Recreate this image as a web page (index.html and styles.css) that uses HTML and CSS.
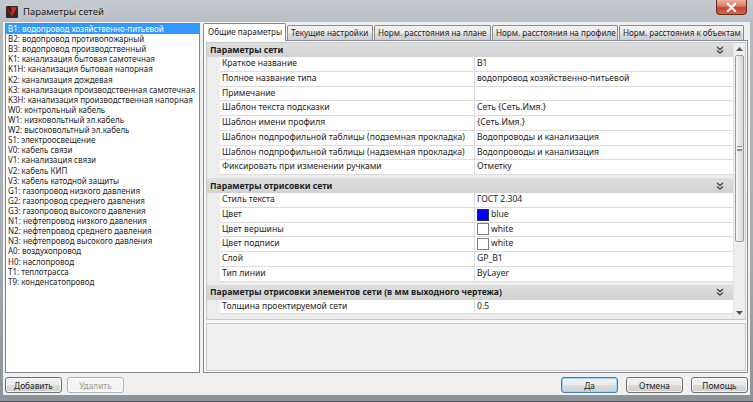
FILE: index.html
```html
<!DOCTYPE html>
<html lang="ru">
<head>
<meta charset="utf-8">
<title>Параметры сетей</title>
<link rel="stylesheet" href="styles.css">
</head>
<body>
<div class="window">
  <div class="titlebar">
    <svg class="appicon" width="12" height="12" viewBox="0 0 12 12">
      <rect x="0" y="0" width="12" height="12" rx="1" fill="#2b2b2b"/>
      <polygon points="1,1 11,1 6,11" fill="#d8231f"/>
      <polygon points="1,1 5,1 6,8" fill="#5a1010"/>
    </svg>
    <span class="title">Параметры сетей</span>
    <div class="close">
      <svg width="11" height="9" viewBox="0 0 11 9"><path d="M2 1 L9 8 M9 1 L2 8" stroke="#fff" stroke-width="2.2" stroke-linecap="square"/></svg>
    </div>
  </div>
  <div class="client">
    <div class="main">
      <ul class="netlist">
        <li class="sel">B1: водопровод хозяйственно-питьевой</li>
        <li>B2: водопровод противопожарный</li>
        <li>B3: водопровод производственный</li>
        <li>K1: канализация бытовая самотечная</li>
        <li>K1H: канализация бытовая напорная</li>
        <li>K2: канализация дождевая</li>
        <li>K3: канализация производственная самотечная</li>
        <li>K3H: канализация производственная напорная</li>
        <li>W0: контрольный кабель</li>
        <li>W1: низковольтный эл.кабель</li>
        <li>W2: высоковольтный эл.кабель</li>
        <li>S1: электроосвещение</li>
        <li>V0: кабель связи</li>
        <li>V1: канализация связи</li>
        <li>V2: кабель КИП</li>
        <li>V3: кабель катодной защиты</li>
        <li>G1: газопровод низкого давления</li>
        <li>G2: газопровод среднего давления</li>
        <li>G3: газопровод высокого давления</li>
        <li>N1: нефтепровод низкого давления</li>
        <li>N2: нефтепровод среднего давления</li>
        <li>N3: нефтепровод высокого давления</li>
        <li>A0: воздухопровод</li>
        <li>H0: наслопровод</li>
        <li>T1: теплотрасса</li>
        <li>T9: конденсатопровод</li>
      </ul>
      <div class="tabs">
        <div class="tabstrip">
          <div class="tab active t1">Общие параметры</div>
          <div class="tab t2">Текущие настройки</div>
          <div class="tab t3">Норм. расстояния на плане</div>
          <div class="tab t4">Норм. расстояния на профиле</div>
          <div class="tab t5">Норм. расстояния к объектам</div>
        </div>
        <div class="tabpanel">
          <div class="pgrid">
            <div class="pg-body">
              <div class="cat first"><span>Параметры сети</span>
                <svg class="chev" width="8" height="8" viewBox="0 0 8 8"><path d="M1 1 L4 3.5 L7 1 M1 4.5 L4 7 L7 4.5" fill="none" stroke="#4a4a4a" stroke-width="1.4"/></svg>
              </div>
              <div class="row"><div class="gut"></div><div class="label">Краткое название</div><div class="value">B1</div></div>
              <div class="row"><div class="gut"></div><div class="label">Полное название типа</div><div class="value">водопровод хозяйственно-питьевой</div></div>
              <div class="row"><div class="gut"></div><div class="label">Примечание</div><div class="value"></div></div>
              <div class="row"><div class="gut"></div><div class="label">Шаблон текста подсказки</div><div class="value">Сеть {Сеть.Имя.}</div></div>
              <div class="row"><div class="gut"></div><div class="label">Шаблон имени профиля</div><div class="value">{Сеть.Имя.}</div></div>
              <div class="row"><div class="gut"></div><div class="label">Шаблон подпрофильной таблицы (подземная прокладка)</div><div class="value">Водопроводы и канализация</div></div>
              <div class="row"><div class="gut"></div><div class="label">Шаблон подпрофильной таблицы (надземная прокладка)</div><div class="value">Водопроводы и канализация</div></div>
              <div class="row"><div class="gut"></div><div class="label">Фиксировать при изменении ручками</div><div class="value">Отметку</div></div>
              <div class="cat"><span>Параметры отрисовки сети</span>
                <svg class="chev" width="8" height="8" viewBox="0 0 8 8"><path d="M1 1 L4 3.5 L7 1 M1 4.5 L4 7 L7 4.5" fill="none" stroke="#4a4a4a" stroke-width="1.4"/></svg>
              </div>
              <div class="row"><div class="gut"></div><div class="label">Стиль текста</div><div class="value">ГОСТ 2.304</div></div>
              <div class="row"><div class="gut"></div><div class="label">Цвет</div><div class="value"><span class="swatch blue"></span>blue</div></div>
              <div class="row"><div class="gut"></div><div class="label">Цвет вершины</div><div class="value"><span class="swatch white"></span>white</div></div>
              <div class="row"><div class="gut"></div><div class="label">Цвет подписи</div><div class="value"><span class="swatch white"></span>white</div></div>
              <div class="row"><div class="gut"></div><div class="label">Слой</div><div class="value">GP_B1</div></div>
              <div class="row"><div class="gut"></div><div class="label">Тип линии</div><div class="value">ByLayer</div></div>
              <div class="cat"><span>Параметры отрисовки элементов сети (в мм выходного чертежа)</span>
                <svg class="chev" width="8" height="8" viewBox="0 0 8 8"><path d="M1 1 L4 3.5 L7 1 M1 4.5 L4 7 L7 4.5" fill="none" stroke="#4a4a4a" stroke-width="1.4"/></svg>
              </div>
              <div class="row"><div class="gut"></div><div class="label">Толщина проектируемой сети</div><div class="value">0.5</div></div>
            </div>
            <div class="vscroll">
              <div class="arrow"><svg width="7" height="4" viewBox="0 0 7 4"><path d="M0 4 L3.5 0 L7 4Z" fill="#555"/></svg></div>
              <div class="track">
                <div class="thumb"><span class="grip"></span></div>
              </div>
              <div class="arrow"><svg width="7" height="4" viewBox="0 0 7 4"><path d="M0 0 L3.5 4 L7 0Z" fill="#555"/></svg></div>
            </div>
          </div>
          <div class="help"></div>
        </div>
      </div>
    </div>
    <div class="bottombar">
      <div class="btngroup left">
        <button class="btn">Добавить</button>
        <button class="btn disabled">Удалить</button>
      </div>
      <div class="btngroup right">
        <button class="btn default">Да</button>
        <button class="btn">Отмена</button>
        <button class="btn">Помощь</button>
      </div>
    </div>
  </div>
</div>
</body>
</html>
```
FILE: styles.css
```css
* { box-sizing: border-box; }
html, body { margin: 0; padding: 0; }
body {
  width: 753px;
  height: 402px;
  overflow: hidden;
  font-family: "Noto Sans", "Open Sans", "DejaVu Sans", sans-serif;
  color: #1e1e1e;
  background: #7f868c;
}
.window {
  width: 753px;
  height: 402px;
  display: flex;
  flex-direction: column;
  padding: 0 3px 6px 3px;
  background: linear-gradient(#c4cacf 0%, #b3babf 8%, #a6adb3 60%, #8b9298 100%);
  border-bottom: 1px solid #50565b;
}
.titlebar {
  height: 22px;
  flex: none;
  display: flex;
  align-items: center;
}
.appicon { margin-left: 3px; margin-top: 1px; flex: none; }
.title {
  margin-left: 5px;
  font-size: 9.5px;
  color: #1a1a1a;
  text-shadow: 0 0 6px rgba(255,255,255,0.7);
}
.close {
  margin-left: auto;
  margin-right: 3px;
  align-self: flex-start;
  width: 31px;
  height: 15px;
  border: 1px solid #6e2a1f;
  border-top: none;
  border-radius: 0 0 4px 4px;
  background: linear-gradient(#eab2a3 0%, #d97a63 45%, #c8442b 55%, #d2654a 100%);
  display: flex;
  align-items: center;
  justify-content: center;
}
.client {
  flex: 1;
  min-height: 0;
  background: #f0f0f0;
  display: flex;
  flex-direction: column;
  padding: 1px 2px 2px 2px;
}
.main {
  flex: 1;
  min-height: 0;
  display: flex;
  gap: 3px;
}
.netlist {
  width: 195px;
  flex: none;
  margin: 0;
  padding: 0;
  list-style: none;
  background: #fff;
  border: 1px solid #828790;
  font-size: 8px;
  overflow: hidden;
}
.netlist li {
  height: 10.12px;
  line-height: 10.12px;
  padding-left: 2px;
  white-space: nowrap;
  color: #1e1e1e;
}
.netlist li.sel {
  background: #3399ff;
  color: #fff;
}
.tabs {
  flex: 1;
  min-width: 0;
  display: flex;
  flex-direction: column;
}
.tabstrip {
  height: 17px;
  flex: none;
  display: flex;
  align-items: flex-end;
  gap: 1px;
  position: relative;
  z-index: 1;
}
.tab {
  height: 15px;
  border: 1px solid #898c95;
  border-bottom: none;
  border-radius: 2px 2px 0 0;
  font-size: 8.1px;
  line-height: 14px;
  padding-left: 3px;
  white-space: nowrap;
  overflow: hidden;
  background: linear-gradient(#f3f3f3 0%, #ebebeb 50%, #dddddd 51%, #cfcfcf 100%);
  flex: none;
}
.tab.active {
  height: 18px;
  margin-bottom: -1px;
  background: #fff;
  padding-left: 4px;
  line-height: 16px;
}
.t1 { width: 83px; }
.t2 { width: 86px; }
.t3 { width: 117px; }
.t4 { width: 126px; }
.t5 { width: 125px; }
.tabpanel {
  flex: 1;
  min-height: 0;
  border: 1px solid #898c95;
  background: #f7f7f7;
  padding: 1px 1px 1px 2px;
  display: flex;
  flex-direction: column;
  gap: 3px;
}
.pgrid {
  height: 278px;
  flex: none;
  display: flex;
  border: 1px solid #c9c9c9;
  background: #ededed;
}
.pg-body {
  flex: 1;
  min-width: 0;
  display: flex;
  flex-direction: column;
  font-size: 8.6px;
}
.cat {
  height: 15px;
  flex: none;
  margin-top: 3px;
  display: flex;
  align-items: center;
  padding-left: 3px;
  padding-right: 9px;
  font-weight: bold;
  color: #222;
  background: linear-gradient(#dedede, #d2d2d2);
  border-radius: 0 3px 0 0;
  white-space: nowrap;
}
.cat.first { margin-top: 0; height: 14px; }
.cat span { flex: 1; }
.chev { flex: none; }
.row {
  height: 14.75px;
  flex: none;
  display: flex;
}
.gut { width: 13px; flex: none; }
.label {
  width: 255px;
  flex: none;
  background: #fff;
  border-right: 1px solid #dcdcdc;
  border-bottom: 1px solid #dcdcdc;
  padding-left: 2px;
  line-height: 13.5px;
  white-space: nowrap;
  overflow: hidden;
}
.value {
  flex: 1;
  background: #fff;
  border-bottom: 1px solid #dcdcdc;
  padding-left: 2px;
  line-height: 13.5px;
  white-space: nowrap;
  display: flex;
  align-items: center;
}
.swatch {
  width: 12px;
  height: 12px;
  flex: none;
  margin-right: 2px;
  border: 1px solid #808080;
}
.swatch.blue { background: #0000ff; border-color: #303030; }
.swatch.white { background: #fff; }
.vscroll {
  width: 12px;
  flex: none;
  display: flex;
  flex-direction: column;
  background: #eeeeee;
  border-left: 1px solid #e2e2e2;
}
.arrow {
  height: 12px;
  flex: none;
  display: flex;
  align-items: center;
  justify-content: center;
}
.track {
  flex: 1;
  display: flex;
  flex-direction: column;
  padding-bottom: 65px;
}
.thumb {
  flex: 1;
  margin: 0 1px;
  border: 1px solid #9d9d9d;
  border-radius: 2px;
  background: linear-gradient(90deg, #f4f4f4, #e4e4e4 50%, #d6d6d6);
  display: flex;
  align-items: center;
  justify-content: center;
}
.grip {
  width: 5px;
  height: 5px;
  border-top: 1px solid #8c8c8c;
  border-bottom: 1px solid #8c8c8c;
  background: linear-gradient(#f4f4f4 0 1px, #8c8c8c 1px 2px, #f4f4f4 2px);
  background-size: 100% 3px;
  background-repeat: no-repeat;
  background-position: 0 1px;
}
.help {
  flex: 1;
  border: 1px solid #c9c9c9;
  background: #f0f0f0;
}
.bottombar {
  height: 16px;
  flex: none;
  margin-top: 4px;
  display: flex;
  justify-content: space-between;
}
.btngroup { display: flex; }
.btngroup.left { gap: 5px; }
.btngroup.right { gap: 8px; }
.btn {
  width: 57px;
  height: 16px;
  margin: 0;
  padding: 0;
  font-family: inherit;
  font-size: 8.3px;
  color: #1e1e1e;
  border: 1px solid #707070;
  border-radius: 3px;
  background: linear-gradient(#f2f2f2 0%, #ebebeb 50%, #dddddd 51%, #cfcfcf 100%);
  box-shadow: inset 0 0 0 1px rgba(255,255,255,0.7);
}
.btn.default { border-color: #3c7fb1; box-shadow: inset 0 0 0 1px #9fd6f5; }
.btn.disabled {
  color: #9a9a9a;
  border-color: #adb2b5;
  background: #f4f4f4;
}
```
